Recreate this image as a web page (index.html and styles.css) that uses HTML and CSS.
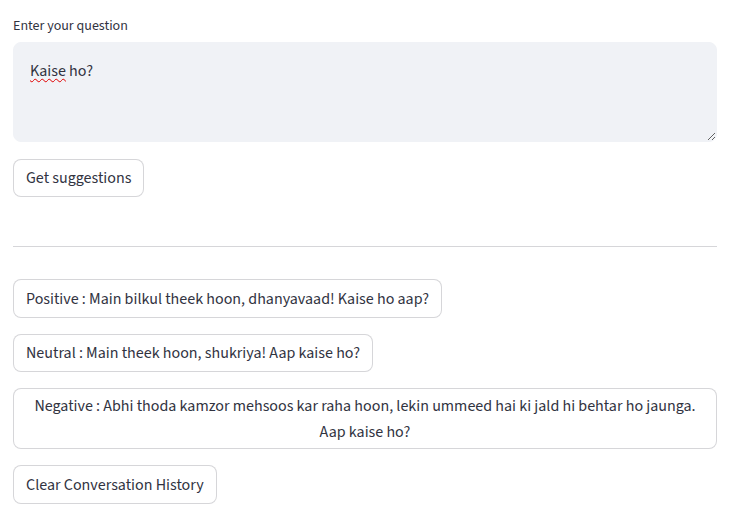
FILE: index.html
```
<!DOCTYPE html>
<html>
<head>
<meta charset="utf-8">
<link rel="stylesheet" href="styles.css">
</head>
<body>
<main class="main">
  <div class="field">
    <label class="label">Enter your question</label>
    <div class="textarea"><span class="misspelled">Kaise</span> ho?</div>
  </div>
  <button class="btn btn-first">Get suggestions</button>
  <hr class="divider">
  <button class="btn">Positive : Main bilkul theek hoon, dhanyavaad! Kaise ho aap?</button>
  <button class="btn">Neutral : Main theek hoon, shukriya! Aap kaise ho?</button>
  <button class="btn">Negative : Abhi thoda kamzor mehsoos kar raha hoon, lekin ummeed hai ki jald hi behtar ho jaunga. Aap kaise ho?</button>
  <button class="btn">Clear Conversation History</button>
</main>
</body>
</html>
```
FILE: styles.css
```
html, body {
  margin: 0;
  padding: 0;
  background: #ffffff;
}
body {
  font-family: "Source Sans 3", "Source Sans Pro", "Liberation Sans", sans-serif;
  color: rgb(49, 51, 63);
  font-size: 16px;
}
.main {
  width: 704px;
  padding: 16px 0 0 13px;
  display: flex;
  flex-direction: column;
  align-items: flex-start;
  gap: 16px;
}
.field {
  width: 100%;
  display: flex;
  flex-direction: column;
}
.label {
  font-size: 14px;
  line-height: 21px;
  height: 21px;
  margin-bottom: 5px;
  color: rgb(49, 51, 63);
}
.textarea {
  box-sizing: border-box;
  width: 100%;
  height: 100px;
  background: rgb(240, 242, 246);
  border: 1px solid rgb(240, 242, 246);
  border-radius: 8px;
  padding: 17px 16px 13px 16px;
  line-height: 22.4px;
  font-size: 16px;
  resize: vertical;
  overflow: auto;
}
.misspelled {
  text-decoration: underline wavy #e00000;
  text-decoration-thickness: 1px;
  text-underline-offset: 2px;
}
.btn {
  box-sizing: border-box;
  max-width: 100%;
  min-height: 38.4px;
  padding: 5px 12px 3px 12px;
  margin: 0;
  background: #ffffff;
  border: 1px solid rgba(49, 51, 63, 0.2);
  border-radius: 8px;
  font-family: inherit;
  font-size: 16px;
  line-height: 25.6px;
  color: rgb(49, 51, 63);
  text-align: center;
}
.btn-first {
  margin-top: 1px;
}
.divider {
  width: 100%;
  margin: 33px 0 16px 0;
  border: none;
  border-top: 1px solid rgba(49, 51, 63, 0.2);
  height: 0;
}
```
